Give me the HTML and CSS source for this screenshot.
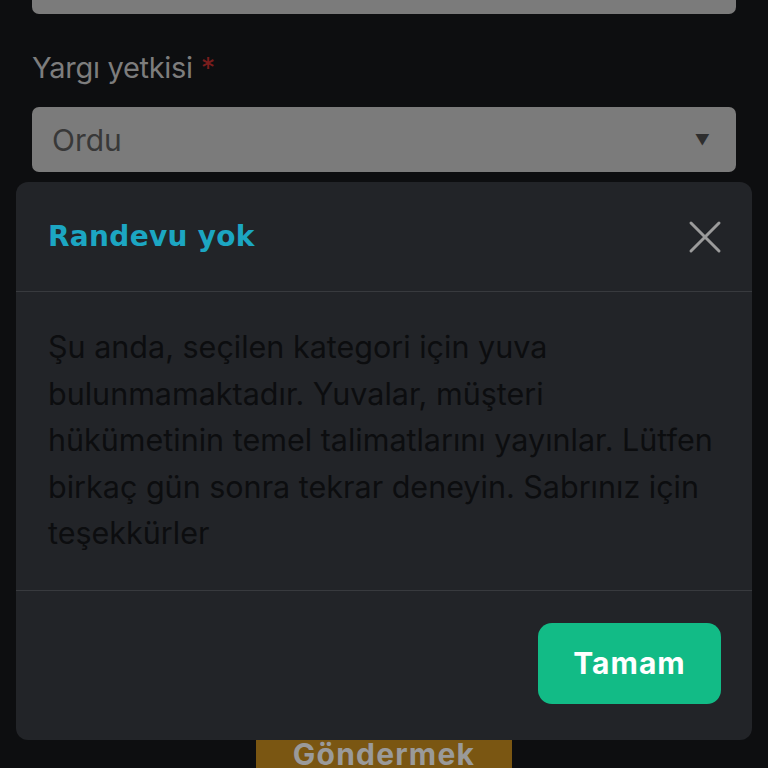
FILE: index.html
```html
<!DOCTYPE html>
<html lang="tr">
<head>
    <meta charset="UTF-8">
    <meta name="viewport" content="width=device-width, initial-scale=1.0">
    <title>Randevu</title>
    <link rel="stylesheet" href="styles.css">
</head>
<body>
    <!-- Form behind the dialog -->
    <div class="form">
        <div class="field field-top"></div>

        <label class="label">Yargı yetkisi <span class="req">*</span></label>
        <div class="field select">
            <span>Ordu</span>
            <span class="arrow">&#9660;</span>
        </div>

        <div class="submit-row">
            <button class="submit">Göndermek</button>
        </div>
    </div>

    <!-- Dialog -->
    <div class="overlay">
        <div class="modal">
            <div class="modal-header">
                <h2 class="modal-title">Randevu yok</h2>
                <button class="close" aria-label="Kapat">
                    <svg width="34" height="34" viewBox="0 0 34 34">
                        <path d="M3 3 L31 31 M31 3 L3 31" stroke="#9b9b9b" stroke-width="3" stroke-linecap="round"/>
                    </svg>
                </button>
            </div>
            <div class="modal-body">
                Şu anda, seçilen kategori için yuva bulunmamaktadır. Yuvalar, müşteri hükümetinin temel talimatlarını yayınlar. Lütfen birkaç gün sonra tekrar deneyin. Sabrınız için teşekkürler
            </div>
            <div class="modal-footer">
                <button class="ok">Tamam</button>
            </div>
        </div>
    </div>
</body>
</html>
```

FILE: styles.css
```css
body {
    margin: 0;
    background-color: #0d0e10;
    font-family: Inter, "Noto Sans", sans-serif;
    height: 768px;
    overflow: hidden;
    position: relative;
}
.form {
    padding: 0 32px;
    display: flex;
    flex-direction: column;
}
.field {
    height: 65px;
    background-color: #7b7b7b;
    border-radius: 7px;
    box-sizing: border-box;
}
.field-top {
    margin-top: -51px;
}
.label {
    margin-top: 36px;
    font-size: 29px;
    line-height: 36px;
    letter-spacing: -0.3px;
    color: #7d7d7d;
}
.req {
    color: #7a1d1d;
}
.select {
    margin-top: 21px;
    display: flex;
    align-items: center;
    justify-content: space-between;
    padding: 0 26px 0 20px;
    font-size: 30px;
    color: #383838;
}
.arrow {
    font-size: 15px;
    color: #2e2e2e;
}
.submit-row {
    margin-top: 567px;
    display: flex;
    justify-content: center;
}
.submit {
    width: 256px;
    height: 60px;
    border: none;
    background-color: #7a5612;
    color: #9a9a9a;
    font-family: Inter, sans-serif;
    font-weight: 700;
    font-size: 30px;
    letter-spacing: 1.2px;
    padding: 0;
    line-height: 30px;
    display: flex;
    justify-content: center;
    align-items: flex-start;
}
.overlay {
    position: absolute;
    top: 182px;
    left: 16px;
    right: 16px;
}
.modal {
    background-color: #222428;
    border-radius: 12px;
    height: 558px;
    display: flex;
    flex-direction: column;
}
.modal-header {
    height: 110px;
    box-sizing: border-box;
    display: flex;
    align-items: center;
    justify-content: space-between;
    padding: 0 30px 0 32px;
    border-bottom: 1px solid #383a3e;
}
.modal-title {
    margin: 0;
    font-family: "DejaVu Sans", sans-serif;
    font-size: 28px;
    font-weight: 700;
    color: #1ca6c2;
    letter-spacing: 0.3px;
}
.close {
    background: none;
    border: none;
    padding: 0;
    display: flex;
}
.modal-body {
    padding: 32px 32px 33px;
    font-size: 30.5px;
    line-height: 46.5px;
    color: #0c0d0f;
    border-bottom: 1px solid #383a3e;
}
.modal-footer {
    flex: 1;
    display: flex;
    justify-content: flex-end;
    align-items: flex-start;
    padding: 32px 31px 0;
}
.ok {
    width: 183px;
    height: 81px;
    border: none;
    border-radius: 14px;
    background-color: #12bb86;
    color: #ffffff;
    font-family: Inter, sans-serif;
    font-weight: 700;
    font-size: 30px;
    letter-spacing: 1px;
}
```
